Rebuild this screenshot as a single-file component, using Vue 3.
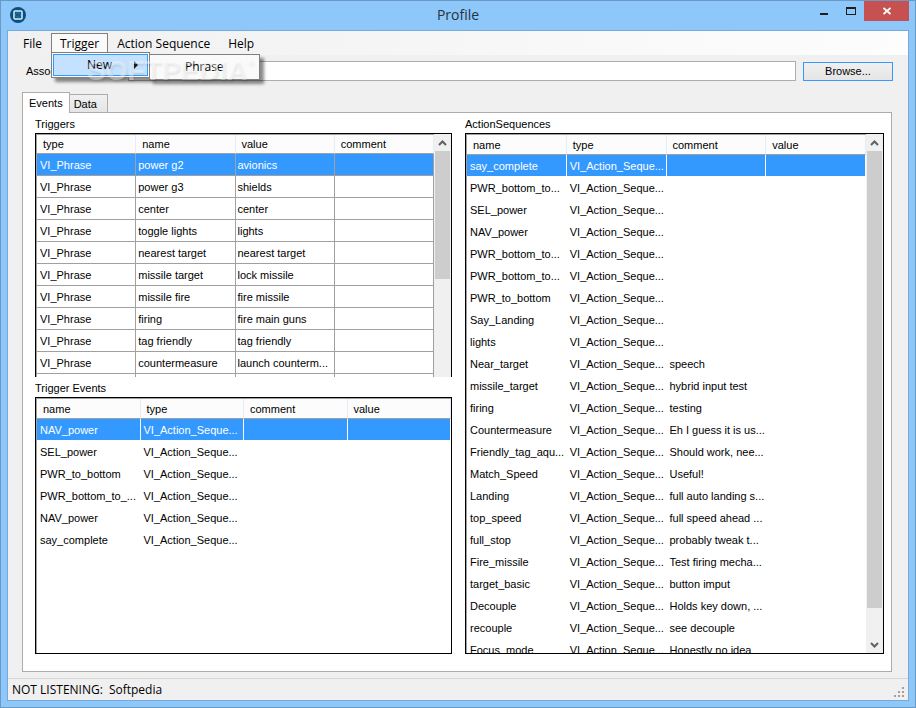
<template>
  <div class="window">
    <header class="titlebar">
      <svg class="app-icon" viewBox="0 0 16 16" aria-hidden="true">
        <circle cx="8" cy="8" r="8" fill="#0b4f7d" />
        <rect x="4" y="4" width="8" height="8" rx="1" fill="#0b4f7d" stroke="#d9f0fc" stroke-width="1.5" />
        <circle cx="8" cy="8" r="2.800" fill="#2b78a6" />
        <path d="M7 6.500v3M9 6.500v3" stroke="#063b60" />
      </svg>
      <h1>Profile</h1>
      <div class="controls">
        <button class="control" aria-label="Minimize">
          <svg width="10" height="12" viewBox="0 0 10 12"><path d="M1 8h8v2H1z" fill="#1e1e1e" /></svg>
        </button>
        <button class="control" aria-label="Maximize">
          <svg width="10" height="12" viewBox="0 0 10 12">
            <path d="M0 2h10v8H0zM1 4v5h8V4z" fill="#1e1e1e" fill-rule="evenodd" />
          </svg>
        </button>
        <button class="control close" aria-label="Close">
          <svg width="8" height="8" viewBox="0 0 8 8"><path d="M.5 1l7 6M7.500 1l-7 6" stroke="#fff" stroke-width="1.8" /></svg>
        </button>
      </div>
    </header>

    <div class="client">
      <nav class="menubar">
        <button class="menu-item">File</button>
        <div class="menu">
          <button class="menu-item open">Trigger</button>
          <div class="dropdown">
            <button class="entry active">
              New
              <svg width="4" height="8" viewBox="0 0 4 8"><path d="M0 0l4 4-4 4z" fill="#1e1e1e" /></svg>
            </button>
          </div>
          <div class="dropdown submenu">
            <button class="entry">Phrase</button>
          </div>
          <span class="watermark">SOFTPEDIA<sup>®</sup></span>
        </div>
        <button class="menu-item">Action Sequence</button>
        <button class="menu-item">Help</button>
      </nav>

      <div class="process">
        <label for="process">Assoc</label>
        <input id="process" type="text" />
        <button class="browse">Browse...</button>
      </div>

      <div class="tabs">
        <button
          v-for="tab in tabs"
          :key="tab"
          :class="['tab', { selected: tab === currentTab }]"
          @click="currentTab = tab"
        >
          {{ tab }}
        </button>
      </div>

      <main class="panel">
        <section v-for="list in lists" :key="list.title" :class="['list', list.kind]">
          <h2>{{ list.title }}</h2>
          <div class="frame">
            <div class="viewport">
              <table>
                <thead>
                  <tr>
                    <th v-for="column in list.columns" :key="column">{{ column }}</th>
                  </tr>
                </thead>
                <tbody>
                  <tr
                    v-for="(row, index) in list.rows"
                    :key="index"
                    :class="{ selected: index === list.selected }"
                    @click="list.selected = index"
                  >
                    <td v-for="(column, i) in list.columns" :key="column">{{ row[i] }}</td>
                  </tr>
                </tbody>
              </table>
            </div>
            <div v-if="list.thumb" class="scrollbar">
              <svg width="9" height="6" viewBox="0 0 9 6"><path d="M1 5l3.500-3.500L8 5" /></svg>
              <div class="track">
                <div class="thumb" :style="{ height: list.thumb + '%' }"></div>
              </div>
              <svg width="9" height="6" viewBox="0 0 9 6"><path d="M1 1l3.500 3.500L8 1" /></svg>
            </div>
          </div>
        </section>
      </main>

      <footer class="statusbar">
        <span>NOT LISTENING:</span>
        <span>Softpedia</span>
        <svg class="grip" width="11" height="11" viewBox="0 0 11 11" aria-hidden="true">
          <path d="M8 0h2v2H8zM4 4h2v2H4zM8 4h2v2H8zM0 8h2v2H0zM4 8h2v2H4zM8 8h2v2H8z" fill="#a0a0a0" />
        </svg>
      </footer>
    </div>
  </div>
</template>

<script setup>
import { reactive, ref } from "vue";

const tabs = ["Events", "Data"];
const currentTab = ref("Events");

const action = "VI_Action_Seque...";

const lists = reactive([
  {
    title: "Triggers",
    kind: "triggers",
    columns: ["type", "name", "value", "comment"],
    selected: 0,
    thumb: 58,
    rows: [
      ["VI_Phrase", "power g2", "avionics"],
      ["VI_Phrase", "power g3", "shields"],
      ["VI_Phrase", "center", "center"],
      ["VI_Phrase", "toggle lights", "lights"],
      ["VI_Phrase", "nearest target", "nearest target"],
      ["VI_Phrase", "missile target", "lock missile"],
      ["VI_Phrase", "missile fire", "fire missile"],
      ["VI_Phrase", "firing", "fire main guns"],
      ["VI_Phrase", "tag friendly", "tag friendly"],
      ["VI_Phrase", "countermeasure", "launch counterm..."],
      [],
    ],
  },
  {
    title: "Trigger Events",
    kind: "events",
    columns: ["name", "type", "comment", "value"],
    selected: 0,
    rows: [
      ["NAV_power", action],
      ["SEL_power", action],
      ["PWR_to_bottom", action],
      ["PWR_bottom_to_...", action],
      ["NAV_power", action],
      ["say_complete", action],
    ],
  },
  {
    title: "ActionSequences",
    kind: "actions",
    columns: ["name", "type", "comment", "value"],
    selected: 0,
    thumb: 94,
    rows: [
      ["say_complete", action],
      ["PWR_bottom_to...", action],
      ["SEL_power", action],
      ["NAV_power", action],
      ["PWR_bottom_to...", action],
      ["PWR_bottom_to...", action],
      ["PWR_to_bottom", action],
      ["Say_Landing", action],
      ["lights", action],
      ["Near_target", action, "speech"],
      ["missile_target", action, "hybrid input test"],
      ["firing", action, "testing"],
      ["Countermeasure", action, "Eh I guess it is us..."],
      ["Friendly_tag_aqu...", action, "Should work, nee..."],
      ["Match_Speed", action, "Useful!"],
      ["Landing", action, "full auto landing s..."],
      ["top_speed", action, "full speed ahead ..."],
      ["full_stop", action, "probably tweak t..."],
      ["Fire_missile", action, "Test firing mecha..."],
      ["target_basic", action, "button imput"],
      ["Decouple", action, "Holds key down, ..."],
      ["recouple", action, "see decouple"],
      ["Focus_mode", action, "Honestly no idea"],
    ],
  },
]);
</script>

<style>
body {
  margin: 0;
}
</style>

<style scoped>
* {
  box-sizing: border-box;
}

button {
  margin: 0;
  padding: 0;
  border: 0;
  background: none;
  color: inherit;
  font: inherit;
}

.window {
  display: flex;
  flex-direction: column;
  height: 100vh;
  padding: 0 6px 6px;
  border: 1px solid #6b99c5;
  background: #8ec8fb;
  color: #000;
  font: 11px/14px "Liberation Sans", Arial, sans-serif;
}

.titlebar {
  display: grid;
  grid-template-columns: 1fr auto 1fr;
  height: 29px;
  flex: none;
}

.app-icon {
  width: 16px;
  height: 16px;
  margin: 6px 0 0 3px;
}

h1 {
  margin: 0;
  font: 14px/28px "Open Sans", "Noto Sans", sans-serif;
  color: #26323d;
}

.controls {
  display: flex;
  justify-content: flex-end;
  align-items: flex-start;
}

.control {
  display: flex;
  align-items: center;
  justify-content: center;
  width: 27px;
  height: 20px;
}

.close {
  width: 45px;
  background: #c75050;
}

.client {
  display: flex;
  flex-direction: column;
  flex: 1;
  min-height: 0;
  border: 1px solid #76a9dc;
  background: #f0f0f0;
}

.menubar {
  display: flex;
  height: 24px;
  padding: 2px 6px;
  flex: none;
  background: linear-gradient(90deg, #f0f0f0, #fdfdfd);
  font: 12px/18px "Open Sans", "Noto Sans", sans-serif;
}

.menu {
  position: relative;
  z-index: 2;
}

.menu-item {
  height: 20px;
  padding: 0 8px;
  border: 1px solid transparent;
  border-bottom: 0;
}

.menu-item.open {
  border-color: #808080;
  background: #fafafa;
}

.dropdown {
  position: absolute;
  top: 19px;
  left: 0;
  width: 99px;
  padding: 1px;
  border: 1px solid #808080;
  background: #fafafa;
  box-shadow: 4px 4px 3px rgba(0, 0, 0, 0.45);
}

.submenu {
  top: 21px;
  left: 98px;
  width: 111px;
}

.entry {
  display: flex;
  align-items: center;
  justify-content: space-between;
  width: 100%;
  height: 22px;
  padding: 0 9px 0 33px;
  border: 1px solid transparent;
}

.entry.active {
  border-color: #3399ff;
  background: #c4e1ff;
}

.watermark {
  position: absolute;
  top: 19px;
  left: 36px;
  color: rgba(255, 255, 255, 0.4);
  font: bold 28px/38px "Liberation Sans", Arial, sans-serif;
  text-shadow: 1px 2px 2px rgba(0, 0, 0, 0.08);
  pointer-events: none;
}

.watermark sup {
  font-size: 9px;
  line-height: 9px;
  vertical-align: 14px;
}

.process {
  display: flex;
  align-items: center;
  gap: 7px;
  padding: 6px 15px 0 18px;
  flex: none;
}

.process label {
  width: 95px;
}

.process input {
  flex: 1;
  min-width: 0;
  height: 20px;
  padding: 0 4px;
  border: 1px solid #abadb3;
  background: #fff;
  font: inherit;
}

.browse {
  width: 90px;
  height: 19px;
  border: 1px solid #3399ff;
  background: linear-gradient(#f0f0f0, #e5e5e5);
}

.tabs {
  display: flex;
  align-items: flex-end;
  height: 31px;
  padding-left: 14px;
  flex: none;
}

.tab {
  height: 18px;
  padding: 0 10px 0 4px;
  border: 1px solid #acacac;
  border-width: 1px 1px 0 0;
  background: linear-gradient(#f0f0f0, #e5e5e5);
}

.tab.selected {
  height: 21px;
  margin-bottom: -1px;
  padding: 0 6px;
  border-left-width: 1px;
  background: #fff;
  z-index: 1;
}

.panel {
  display: grid;
  grid-template-columns: 417fr 419fr;
  grid-template-rows: 20px minmax(0, 244fr) 20px minmax(0, 257fr);
  column-gap: 13px;
  flex: 1;
  min-height: 0;
  margin: 0 16px 6px 14px;
  padding: 0 7px 17px 12px;
  border: 1px solid #acacac;
  background: #fff;
}

.list {
  display: grid;
  grid-template-rows: 20px minmax(0, 1fr);
  grid-row: 1 / 3;
  min-height: 0;
}

.events {
  grid-row: 3 / 5;
}

.actions {
  grid-column: 2;
  grid-row: 1 / 5;
}

h2 {
  margin: 0;
  padding-top: 4px;
  font: inherit;
}

.frame {
  display: flex;
  min-height: 0;
  overflow: hidden;
  border: 1px solid #000;
}

.triggers .frame {
  border-bottom: 0;
}

.viewport {
  flex: 1;
  min-width: 0;
  overflow: hidden;
  border: 1px solid #a0a0a0;
  border-width: 1px 0 0 1px;
}

table {
  width: 100%;
  table-layout: fixed;
  border-spacing: 0;
}

th,
td {
  padding: 0 0 0 3px;
  border-right: 1px solid #fff;
  border-bottom: 1px solid #fff;
  overflow: hidden;
  font-weight: normal;
  text-align: left;
  white-space: nowrap;
}

th {
  height: 20px;
  padding-left: 6px;
  border-color: #e4edf8;
  border-bottom-color: #a0a0a0;
  background: #fcfcfc;
}

td {
  height: 22px;
}

.triggers th {
  height: 19px;
}

.triggers td {
  padding-left: 2px;
  border-color: #a0a0a0;
}

.triggers td:first-child {
  padding-left: 3px;
}

.selected td {
  background: #3399ff;
  color: #fff;
}

.scrollbar {
  display: flex;
  flex-direction: column;
  align-items: center;
  width: 17px;
  padding: 6px 1px 5px;
  gap: 5px;
  background: #f0f0f0;
}

.scrollbar svg {
  flex: none;
  fill: none;
  stroke: #606060;
  stroke-width: 2;
}

.track {
  flex: 1;
  width: 100%;
}

.thumb {
  background: #cdcdcd;
}

.triggers .scrollbar svg:last-child {
  display: none;
}

.statusbar {
  display: flex;
  align-items: center;
  gap: 6px;
  height: 22px;
  padding: 1px 3px 0 4px;
  flex: none;
  border-top: 1px solid #d7d7d7;
  font: 12px/18px "Open Sans", "Noto Sans", sans-serif;
}

.grip {
  align-self: flex-end;
  margin: 0 0 2px auto;
}
</style>
